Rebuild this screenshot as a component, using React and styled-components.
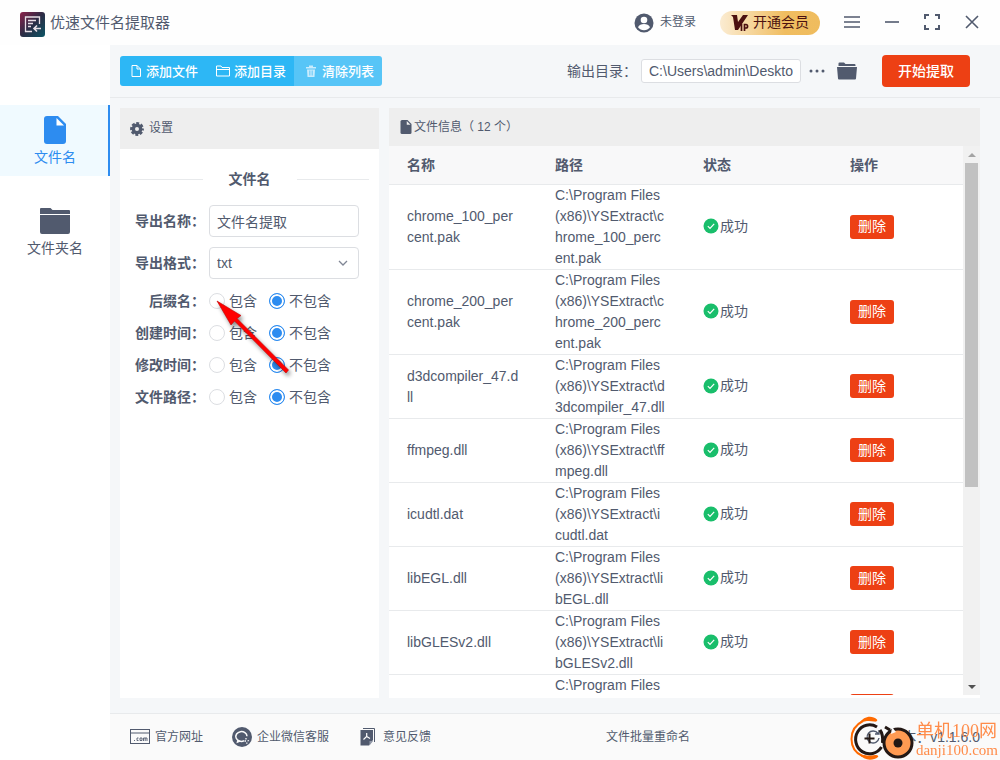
import React, { useState } from "react";
import styled, { createGlobalStyle, css } from "styled-components";

const color = {
  text: "#515a6e",
  blue: "#2d8cf0",
  sky: "#2db7f5",
  red: "#ed4014",
  green: "#19be6b",
  border: "#dcdee2",
  line: "#e8eaec",
  orange: "#ff8c4a",
};

const GlobalStyle = createGlobalStyle`
  *, *::before, *::after {
    box-sizing: border-box;
  }

  body {
    margin: 0;
    background-color: #fff;
    color: ${color.text};
    font-family: "Liberation Sans", "Noto Sans CJK SC", sans-serif;
    font-size: 14px;
    line-height: 21px;
  }

  button, input, select {
    font: inherit;
    color: inherit;
  }

  svg {
    display: block;
    flex: none;
  }
`;

const Window = styled.div`
  display: flex;
  flex-direction: column;
  height: 100vh;
  overflow: hidden;
`;

const Header = styled.header`
  display: flex;
  align-items: center;
  justify-content: space-between;
  height: 45px;
  flex: none;
  padding: 0 20px;
  background-color: #fefefe;
`;

const Brand = styled.div`
  display: flex;
  align-items: center;
  gap: 5px;
  padding-top: 3px;
`;

const Title = styled.h1`
  margin: 0;
  padding-bottom: 4px;
  font-size: 15px;
  line-height: 21px;
  font-weight: 400;
`;

const HeaderActions = styled.div`
  display: flex;
  align-items: center;
`;

const PlainButton = styled.button`
  display: flex;
  align-items: center;
  gap: 6px;
  padding: 0;
  border: none;
  background: none;
  font-size: ${({ $small }) => ($small ? 12 : 14)}px;
  cursor: pointer;
`;

const VipButton = styled.button`
  display: flex;
  align-items: center;
  gap: 4px;
  height: 24px;
  margin: 0 24px;
  padding: 0 11px;
  border: none;
  border-radius: 12px;
  background: linear-gradient(90deg, #fbecd2, #f0bd60 65%, #efbc5e);
  color: #4b1010;
  cursor: pointer;
`;

const WindowControls = styled.div`
  display: flex;
  align-items: center;
  gap: 24px;
  padding-bottom: 2px;
`;

const Body = styled.div`
  display: flex;
  flex: 1;
  min-height: 0;
`;

const Sidebar = styled.nav`
  display: flex;
  flex-direction: column;
  gap: 20px;
  width: 110px;
  flex: none;
  padding-top: 60px;
  background-color: #fff;
`;

const SideItem = styled.button`
  display: flex;
  flex-direction: column;
  align-items: center;
  gap: 3px;
  padding: 11px 0 8px;
  border: none;
  background: none;
  cursor: pointer;

  ${({ $active }) =>
    $active &&
    css`
      background-color: #f0faff;
      box-shadow: inset -2px 0 0 ${color.blue};
      color: ${color.blue};
    `}
`;

const Main = styled.main`
  display: flex;
  flex-direction: column;
  flex: 1;
  min-width: 0;
  background-color: #f5f7f9;
`;

const Toolbar = styled.div`
  display: flex;
  align-items: center;
  justify-content: space-between;
  height: 53px;
  flex: none;
  padding: 0 30px 0 10px;
  border-bottom: 1px solid ${color.line};
`;

const ButtonGroup = styled.div`
  display: flex;
  border-radius: 3px;
  overflow: hidden;
`;

const GroupButton = styled.button`
  display: flex;
  align-items: center;
  gap: 4px;
  height: 30px;
  padding: 0 8px 0 10px;
  border: none;
  background-color: ${({ $light }) => ($light ? "#57c5f7" : color.sky)};
  color: #fff;
  font-size: 13px;
  font-weight: 500;
  cursor: pointer;
`;

const Output = styled.div`
  display: flex;
  align-items: center;
`;

const OutputInput = styled.input`
  width: 160px;
  height: 24px;
  margin: 0 8px 0 4px;
  padding: 1px 7px;
  border: 1px solid ${color.border};
  border-radius: 3px;
  background-color: #fff;
`;

const StartButton = styled.button`
  height: 32px;
  margin-left: 25px;
  padding: 0 16px;
  border: none;
  border-radius: 4px;
  background-color: ${color.red};
  color: #fff;
  font-weight: 500;
  cursor: pointer;
`;

const Panels = styled.div`
  display: flex;
  gap: 10px;
  flex: 1;
  min-height: 0;
  padding: 10px 20px 15px 10px;
`;

const Panel = styled.section`
  display: flex;
  flex-direction: column;
  min-width: 0;
  background-color: #fff;
  ${({ $width }) => ($width ? `flex: none; width: ${$width}px;` : "flex: 1;")}
`;

const PanelTitle = styled.h2`
  display: flex;
  align-items: center;
  gap: ${({ $gap }) => $gap}px;
  height: ${({ $height }) => $height}px;
  flex: none;
  margin: 0;
  padding: 0 10px;
  background-color: #eee;
  font-size: 12px;
  font-weight: 400;
`;

const Divider = styled.h3`
  display: flex;
  align-items: center;
  gap: 26px;
  margin: 20px 10px 15px;
  font-size: 14px;
  line-height: 21px;
  font-weight: 700;

  &::before,
  &::after {
    content: "";
    flex: 1;
    height: 1px;
    background-color: ${color.line};
  }
`;

const Form = styled.form`
  display: flex;
  flex-direction: column;
  gap: 10px;
  padding: 0 20px 0 10px;
`;

const Field = styled.div`
  display: grid;
  grid-template-columns: 75px 1fr;
  align-items: center;
  gap: 4px;
  min-height: 32px;
`;

const FieldLabel = styled.label`
  font-weight: 700;
  text-align: right;
  white-space: nowrap;
`;

const RadioList = styled.div`
  margin-top: -4px;
`;

const controlStyle = css`
  width: 100%;
  height: 32px;
  padding: 1px 7px;
  border: 1px solid ${color.border};
  border-radius: 4px;
  background-color: #fff;
`;

const TextInput = styled.input`
  ${controlStyle}
`;

const SelectBox = styled.div`
  display: grid;
  align-items: center;

  > * {
    grid-area: 1 / 1;
  }

  svg {
    justify-self: end;
    margin-right: 11px;
    color: #808695;
    pointer-events: none;
  }
`;

const Select = styled.select`
  ${controlStyle}
  appearance: none;
`;

const RadioOptions = styled.div`
  display: flex;
  gap: 12px;
`;

const RadioLabel = styled.label`
  display: flex;
  align-items: center;
  gap: 4px;
  white-space: nowrap;
`;

const Radio = styled.input`
  appearance: none;
  width: 16px;
  height: 16px;
  margin: 0;
  border: 1px solid ${color.border};
  border-radius: 50%;
  background-color: #fff;

  &:checked {
    border-color: ${color.blue};
    background-color: ${color.blue};
    box-shadow: inset 0 0 0 2px #fff;
  }
`;

const TableArea = styled.div`
  display: flex;
  flex: 1;
  min-height: 0;
  margin-bottom: 3px;
`;

const TableScroll = styled.div`
  flex: 1;
  min-width: 0;
  overflow: hidden;
`;

const Table = styled.table`
  width: 100%;
  border-collapse: separate;
  border-spacing: 0;
  table-layout: fixed;

  th,
  td {
    padding: 0 18px;
    border-bottom: 1px solid ${color.line};
    text-align: left;
    vertical-align: middle;
    word-break: break-all;
  }

  th {
    height: 39px;
    background-color: #f8f8f9;
    font-weight: 700;
  }
`;

const Col = styled.col`
  width: ${({ $width }) => $width};
`;

const Status = styled.span`
  display: flex;
  align-items: center;
  gap: 1px;
  margin-bottom: 2px;
`;

const DeleteButton = styled.button`
  display: block;
  height: 24px;
  margin-bottom: 1px;
  padding: 0 8px;
  border: none;
  border-radius: 3px;
  background-color: ${color.red};
  color: #fff;
  cursor: pointer;
`;

const Scrollbar = styled.div`
  display: flex;
  flex-direction: column;
  align-items: center;
  width: 17px;
  flex: none;
  background-color: #f1f1f1;
`;

const ScrollArrow = styled.span`
  display: flex;
  align-items: center;
  justify-content: center;
  height: 17px;
  flex: none;
`;

const ScrollTrack = styled.div`
  flex: 1;
  width: 13px;
`;

const ScrollThumb = styled.div`
  height: 63%;
  background-color: #c1c1c1;
`;

const Footer = styled.footer`
  display: flex;
  align-items: center;
  justify-content: space-between;
  height: 47px;
  flex: none;
  padding: 0 20px;
  border-top: 1px solid ${color.line};
  background-color: #fafafa;
  font-size: 12px;
`;

const FooterLinks = styled.div`
  display: flex;
  gap: 29px;
`;

const FooterLink = styled.a`
  display: flex;
  align-items: center;
  gap: 5px;
  color: inherit;
  text-decoration: none;
`;

const Version = styled.span`
  display: flex;
  align-items: center;
  gap: 7px;
  font-size: 14px;
`;

const Watermark = styled.div`
  position: fixed;
  right: 2px;
  bottom: 0;
  display: flex;
  align-items: center;
  gap: 2px;
  color: ${color.orange};
  font-family: "Liberation Serif", "Noto Sans CJK SC", serif;
  pointer-events: none;
`;

const WatermarkText = styled.div`
  display: flex;
  flex-direction: column;
  padding-top: 4px;
  font-size: 15px;
  line-height: 18px;
`;

const WatermarkName = styled.span`
  font-size: 18px;
  line-height: 20px;
`;

const Pointer = styled.svg`
  position: absolute;
  top: 296px;
  left: 213px;
  pointer-events: none;
  filter: drop-shadow(2px 3px 2px rgba(0, 0, 0, 0.45));
`;

const LogoIcon = () => (
  <svg width="25" height="25" viewBox="0 0 25 25">
    <defs>
      <linearGradient id="logo" x1="0" y1="0" x2="1" y2="1">
        <stop offset="0" stopColor="#8d2149" />
        <stop offset="0.5" stopColor="#2b2c45" />
        <stop offset="1" stopColor="#0b5565" />
      </linearGradient>
    </defs>
    <rect width="25" height="25" rx="3" fill="url(#logo)" />
    <g fill="none" stroke="#e8dfe6" strokeWidth="1.3">
      <path d="M19.500 12V5H5.500v14.500h6.500" />
      <path d="M8 8.500h8M8 11.500h5M8 14.500h3" />
      <path d="M21 16.500h-7M17 13.500l-3 3 3 3" strokeWidth="1.600" />
    </g>
  </svg>
);

const UserIcon = () => (
  <svg width="20" height="20" viewBox="0 0 20 20">
    <circle cx="10" cy="10" r="9.500" fill={color.text} />
    <circle cx="10" cy="7" r="3.300" fill="#fff" />
    <path d="M4 14.200c1-2.400 3.300-3.200 6-3.200s5 .8 6 3.200c-1.500 2-3.600 3-6 3s-4.500-1-6-3z" fill="#fff" />
  </svg>
);

const VipIcon = () => (
  <svg width="18" height="18" viewBox="0 0 18 18" fill="none" stroke="#4b1010">
    <path d="M0 1h6l1 7 5-7h5L7 16H4L2 3z" fill="#4b1010" stroke="none" />
    <path d="M10.500 10v7M13.500 17v-6.500h1.500a1.500 1.700 0 0 1 0 3.500h-1.500" strokeWidth="1.700" />
  </svg>
);

const LineIcon = ({ d, width = 16, height = 16, stroke = 1.6 }) => (
  <svg width={width} height={height} viewBox={`0 0 ${width} ${height}`} fill="none" stroke="currentColor" strokeWidth={stroke}>
    <path d={d} />
  </svg>
);

const FileIcon = ({ width = 22, height = 28, fold = "#fff" }) => (
  <svg width={width} height={height} viewBox="0 0 22 28">
    <path d="M3 0h11l8 8v17a3 3 0 0 1-3 3H3a3 3 0 0 1-3-3V3a3 3 0 0 1 3-3z" fill="currentColor" />
    <path d="M12.500 2v7.500H20z" fill={fold} />
  </svg>
);

const FolderIcon = () => (
  <svg width="30" height="28" viewBox="0 0 30 28" fill="currentColor">
    <path d="M0 2a1 1 0 0 1 1-1h9.500l2 2H29a1 1 0 0 1 1 1v3H0zM0 8h30v17a2 2 0 0 1-2 2H2a2 2 0 0 1-2-2z" />
  </svg>
);

const OpenFolderIcon = () => (
  <svg width="20" height="18" viewBox="0 0 20 18" fill="currentColor">
    <path d="M1.500 1.500a1 1 0 0 1 1-1H7l1.500 1.500h9a1 1 0 0 1 1 1V4h-17z" />
    <path d="M0 5h20l-1 11.500a1 1 0 0 1-1 1H2a1 1 0 0 1-1-1z" />
  </svg>
);

const TrashIcon = () => (
  <svg width="14" height="12" viewBox="0 0 14 12" fill="#c9ecfd">
    <path d="M2 2h3V.500h4V2h3v1.500H2zM3 4.500h8L10.500 12h-7z" />
    <path d="M5.500 5.500v5M7 5.500v5M8.500 5.500v5" stroke="#57c5f7" strokeWidth="0.600" />
  </svg>
);

const GearIcon = () => (
  <svg width="14" height="14" viewBox="0 0 14 14">
    <circle cx="7" cy="7" r="3.700" fill="none" stroke={color.text} strokeWidth="3.400" />
    <circle cx="7" cy="7" r="5.700" fill="none" stroke={color.text} strokeWidth="2.400" strokeDasharray="2.900 1.577" strokeDashoffset="1.450" />
  </svg>
);

const CheckIcon = () => (
  <svg width="16" height="16" viewBox="0 0 16 16">
    <circle cx="8" cy="8" r="7.500" fill={color.green} />
    <path d="M4.800 8.200l2.200 2.200 4.200-4.600" fill="none" stroke="#fff" strokeWidth="1.200" />
  </svg>
);

const SiteIcon = () => (
  <svg width="20" height="16" viewBox="0 0 20 16" fill="none" stroke={color.text}>
    <rect x="0.500" y="0.500" width="19" height="14" />
    <path d="M1 4h18" />
    <path d="M4 11.500h1M8.500 9H7v2.500h1.500M10 9h2v2.500h-2zM13.500 12V9h3.500v3M15.200 9v3" strokeWidth="0.900" />
  </svg>
);

const ServiceIcon = () => (
  <svg width="20" height="20" viewBox="0 0 20 20" fill="none" stroke="#fafafa" strokeWidth="1.500">
    <circle cx="10" cy="10" r="10" fill={color.text} stroke="none" />
    <path d="M12 13.800a5.600 4.900 0 1 1 3-4.500M6 13l-.5 2 2.500-1" />
    <path d="M14 11v1.500M12.500 14H14M15.500 14l1.500-.5M14.800 15.500v1.200" strokeWidth="1.300" />
  </svg>
);

const FeedbackIcon = () => (
  <svg width="20" height="18" viewBox="0 0 20 18">
    <path d="M5 .500h11.500V14" fill="none" stroke={color.text} />
    <path d="M2.500 2H15v10l-4 5.500H2.500z" fill={color.text} />
    <path d="M11.500 17.500v-4.500H15z" fill="#9299a8" />
    <path d="M8.700 5v3.500L5.500 11.500M8.700 8.500l3.300 2" fill="none" stroke="#fff" strokeWidth="1.200" />
  </svg>
);

const WatermarkLogo = () => (
  <svg width="64" height="44" viewBox="0 0 64 44" fill="none">
    <path d="M13 5C5 9 1.500 15 1.500 23c0 8 4 14 11 17" stroke="#ff6a00" strokeWidth="2" />
    <path d="M10 6.500c3-6 12-8 17-3 1 1.500-1 2.500-3 2-5-1-9-.5-14 1z" fill="#ff6a00" />
    <path d="M9 38c5 7 14 7 19 3 1-1.500-1-2-3-2-6 1-10 .5-16-1z" fill="#ff6a00" />
    <path d="M27 11a14 14.500 0 1 0 4.500 20" stroke="#231815" strokeWidth="3" />
    <path d="M19.500 17.500v10M14.500 22.500h10" stroke="#231815" strokeWidth="2" />
    <path d="M30 14c3 4 3 8 2.500 13M40 14l-5-3" stroke="#231815" strokeWidth="3" />
    <circle cx="48" cy="27" r="14" fill="#ff9a52" stroke="#231815" strokeWidth="3" />
    <path d="M42 11l4 5-5 2z" fill="#fafafa" />
    <circle cx="48" cy="27" r="4.500" fill="#231815" />
  </svg>
);

const FILE_PATH = "M2 .5h5l3.500 3.500v7.500H2zM7 .5v3.500h3.500";
const FOLDER_PATH = "M.5 11V1h4.500l1 1.500h7.500V11zM.5 4.500h13";

const files = [
  "chrome_100_percent.pak",
  "chrome_200_percent.pak",
  "d3dcompiler_47.dll",
  "ffmpeg.dll",
  "icudtl.dat",
  "libEGL.dll",
  "libGLESv2.dll",
  "resources.pak",
];

const options = [
  ["suffix", "后缀名："],
  ["created", "创建时间："],
  ["modified", "修改时间："],
  ["path", "文件路径："],
];

const RadioRow = ({ name, label }) => (
  <Field role="radiogroup" aria-labelledby={`${name}-label`}>
    <FieldLabel as="span" id={`${name}-label`}>{label}</FieldLabel>
    <RadioOptions>
      <RadioLabel>
        <Radio type="radio" name={name} value="yes" />
        包含
      </RadioLabel>
      <RadioLabel>
        <Radio type="radio" name={name} value="no" defaultChecked />
        不包含
      </RadioLabel>
    </RadioOptions>
  </Field>
);

const Settings = () => (
  <Panel $width={259}>
    <PanelTitle $height={41} $gap={5}>
      <GearIcon />
      设置
    </PanelTitle>
    <Divider>文件名</Divider>
    <Form>
      <Field>
        <FieldLabel htmlFor="export-name">导出名称：</FieldLabel>
        <TextInput id="export-name" defaultValue="文件名提取" />
      </Field>
      <Field>
        <FieldLabel htmlFor="export-format">导出格式：</FieldLabel>
        <SelectBox>
          <Select id="export-format">
            <option>txt</option>
          </Select>
          <LineIcon d="M1 1l4 4 4-4" width={10} height={7} stroke={1.3} />
        </SelectBox>
      </Field>
      <RadioList>
        {options.map(([name, label]) => (
          <RadioRow key={name} name={name} label={label} />
        ))}
      </RadioList>
    </Form>
  </Panel>
);

const FileTable = () => (
  <Panel>
    <PanelTitle $height={38} $gap={1}>
      <FileIcon width={14} height={14} fold="#eee" />
      文件信息（ 12 个）
    </PanelTitle>
    <TableArea>
      <TableScroll>
        <Table>
          <colgroup>
            <Col $width="148px" />
            <Col $width="148px" />
            <Col $width="147px" />
            <Col $width="auto" />
          </colgroup>
          <thead>
            <tr>
              <th>名称</th>
              <th>路径</th>
              <th>状态</th>
              <th>操作</th>
            </tr>
          </thead>
          <tbody>
            {files.map((file) => (
              <tr key={file}>
                <td>{file}</td>
                <td>{`C:\\Program Files (x86)\\YSExtract\\${file}`}</td>
                <td>
                  <Status>
                    <CheckIcon />
                    成功
                  </Status>
                </td>
                <td>
                  <DeleteButton>删除</DeleteButton>
                </td>
              </tr>
            ))}
          </tbody>
        </Table>
      </TableScroll>
      <Scrollbar aria-hidden="true">
        <ScrollArrow>
          <svg width="8" height="4" viewBox="0 0 8 4"><path d="M0 4l4-4 4 4z" fill="#a3a3a3" /></svg>
        </ScrollArrow>
        <ScrollTrack>
          <ScrollThumb />
        </ScrollTrack>
        <ScrollArrow>
          <svg width="8" height="4" viewBox="0 0 8 4"><path d="M0 0l4 4 4-4z" fill="#505050" /></svg>
        </ScrollArrow>
      </Scrollbar>
    </TableArea>
  </Panel>
);

const FolderButton = styled(PlainButton)`
  margin-left: 12px;
`;

const App = () => {
  const [tab, setTab] = useState("file");

  return (
    <Window>
      <GlobalStyle />
      <Header>
        <Brand>
          <LogoIcon />
          <Title>优速文件名提取器</Title>
        </Brand>
        <HeaderActions>
          <PlainButton $small>
            <UserIcon />
            未登录
          </PlainButton>
          <VipButton>
            <VipIcon />
            开通会员
          </VipButton>
          <WindowControls>
            <PlainButton aria-label="菜单">
              <LineIcon d="M0 2h16M0 7h16M0 12h16" height={14} stroke={1.5} />
            </PlainButton>
            <PlainButton aria-label="最小化">
              <LineIcon d="M1 8h14" />
            </PlainButton>
            <PlainButton aria-label="最大化">
              <LineIcon d="M1 5V1h4M11 1h4v4M15 11v4h-4M5 15H1v-4" stroke={2} />
            </PlainButton>
            <PlainButton aria-label="关闭">
              <LineIcon d="M2 2l12 12M14 2L2 14" />
            </PlainButton>
          </WindowControls>
        </HeaderActions>
      </Header>
      <Body>
        <Sidebar>
          <SideItem $active={tab === "file"} onClick={() => setTab("file")}>
            <FileIcon />
            文件名
          </SideItem>
          <SideItem $active={tab === "folder"} onClick={() => setTab("folder")}>
            <FolderIcon />
            文件夹名
          </SideItem>
        </Sidebar>
        <Main>
          <Toolbar>
            <ButtonGroup>
              <GroupButton>
                <LineIcon d={FILE_PATH} width={12} height={12} stroke={1} />
                添加文件
              </GroupButton>
              <GroupButton>
                <LineIcon d={FOLDER_PATH} width={14} height={12} stroke={1} />
                添加目录
              </GroupButton>
              <GroupButton $light>
                <TrashIcon />
                清除列表
              </GroupButton>
            </ButtonGroup>
            <Output>
              <label htmlFor="output">输出目录：</label>
              <OutputInput id="output" defaultValue="C:\Users\admin\Deskto" />
              <PlainButton aria-label="更多">
                <svg width="16" height="4" viewBox="0 0 16 4" fill="currentColor">
                  <circle cx="2" cy="2" r="1.500" />
                  <circle cx="8" cy="2" r="1.500" />
                  <circle cx="14" cy="2" r="1.500" />
                </svg>
              </PlainButton>
              <FolderButton aria-label="打开目录">
                <OpenFolderIcon />
              </FolderButton>
              <StartButton>开始提取</StartButton>
            </Output>
          </Toolbar>
          <Panels>
            <Settings />
            <FileTable />
          </Panels>
          <Footer>
            <FooterLinks>
              <FooterLink href="#site">
                <SiteIcon />
                官方网址
              </FooterLink>
              <FooterLink href="#service">
                <ServiceIcon />
                企业微信客服
              </FooterLink>
              <FooterLink href="#feedback">
                <FeedbackIcon />
                意见反馈
              </FooterLink>
            </FooterLinks>
            <FooterLink href="#rename">文件批量重命名</FooterLink>
            <Version>
              <LineIcon d="M13 4.500A6 6 0 1 0 14 9M14 1v4h-4" stroke={1.4} />
              版本：v1.1.6.0
            </Version>
          </Footer>
        </Main>
      </Body>
      <Pointer width="90" height="90" viewBox="0 0 90 90">
        <path d="M4 5l24 14.500-4 3L75.500 74 73 77 21.500 25l-3.500 4z" fill="#f00" stroke="#c00000" strokeWidth="0.600" />
      </Pointer>
      <Watermark>
        <WatermarkLogo />
        <WatermarkText>
          <WatermarkName>单机100网</WatermarkName>
          danji100.com
        </WatermarkText>
      </Watermark>
    </Window>
  );
};

export default App;
